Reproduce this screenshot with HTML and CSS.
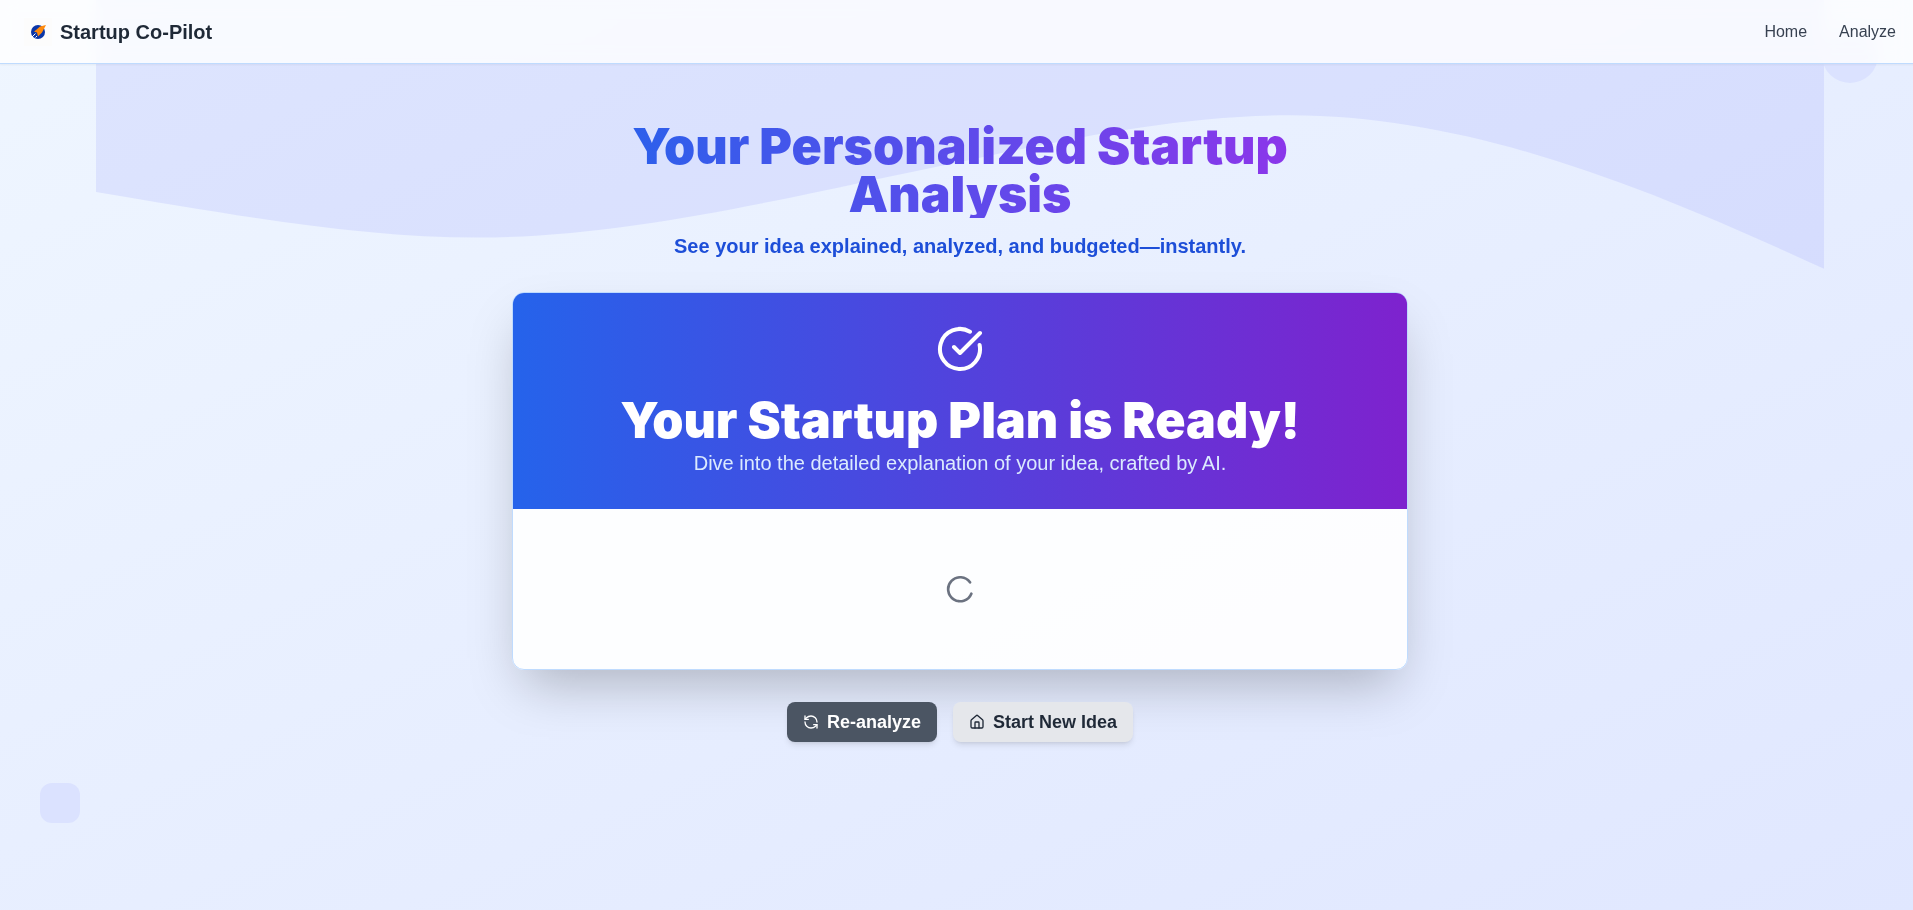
FILE: index.html
```html
<!DOCTYPE html>
<html lang="en">
<head>
    <meta charset="UTF-8">
    <meta name="viewport" content="width=device-width, initial-scale=1.0">
    <title>Startup Co-Pilot</title>
    <link rel="stylesheet" href="styles.css">
</head>
<body>
    <div class="page">
        <!-- Background shapes -->
        <div class="backdrop" aria-hidden="true">
            <svg class="wave" viewBox="0 0 1440 320">
                <path d="M0,160C120,180,220,198,318,198C450,198,600,159,720,135C800,118,900,96,995,96C1150,96,1300,160,1440,224L1440,0L0,0Z"/>
            </svg>
            <div class="shape circle"></div>
            <div class="shape square"></div>
        </div>

        <header class="navbar">
            <a class="brand" href="#">
                <svg class="logo" viewBox="0 0 28 28" aria-hidden="true">
                    <rect width="28" height="28" fill="#fcfcfc"/>
                    <circle cx="14" cy="14" r="7" fill="#0b36a8"/>
                    <path d="M22 7 16 8.500 12 12 10 13.500 13 14.500 14 18.500 18 14.500Z" fill="#ff8a0c"/>
                    <path d="m8 19 3.500-3.500M11.500 19.500l1.500-1.500" stroke="#fff" stroke-width="1"/>
                </svg>
                <span>Startup Co-Pilot</span>
            </a>
            <nav class="nav-links">
                <a href="#">Home</a>
                <a href="#">Analyze</a>
            </nav>
        </header>

        <main class="content">
            <h1>Your Personalized Startup Analysis</h1>
            <p class="tagline">See your idea explained, analyzed, and budgeted—instantly.</p>

            <section class="card">
                <div class="card-header">
                    <svg class="icon check" viewBox="0 0 24 24" aria-hidden="true">
                        <path d="M21.801 10A10 10 0 1 1 17 3.335"/>
                        <path d="m9 11 3 3L22 4"/>
                    </svg>
                    <h2>Your Startup Plan is Ready!</h2>
                    <p>Dive into the detailed explanation of your idea, crafted by AI.</p>
                </div>
                <div class="card-body">
                    <svg class="icon spinner" viewBox="0 0 24 24" role="img" aria-label="Loading">
                        <path d="M19.500 7A9 9 0 1 0 20.500 15.500"/>
                    </svg>
                </div>
            </section>

            <div class="actions">
                <button class="btn btn-dark" type="button">
                    <svg class="icon" viewBox="0 0 24 24" aria-hidden="true">
                        <path d="M21 12a9 9 0 0 0-9-9 9.750 9.750 0 0 0-6.740 2.740L3 8"/>
                        <path d="M3 3v5h5"/>
                        <path d="M3 12a9 9 0 0 0 9 9 9.750 9.750 0 0 0 6.740-2.740L21 16"/>
                        <path d="M16 16h5v5"/>
                    </svg>
                    Re-analyze
                </button>
                <button class="btn btn-light" type="button">
                    <svg class="icon" viewBox="0 0 24 24" aria-hidden="true">
                        <path d="M15 21v-8a1 1 0 0 0-1-1h-4a1 1 0 0 0-1 1v8"/>
                        <path d="M3 10a2 2 0 0 1 .709-1.528l7-5.999a2 2 0 0 1 2.582 0l7 5.999A2 2 0 0 1 21 10v9a2 2 0 0 1-2 2H5a2 2 0 0 1-2-2z"/>
                    </svg>
                    Start New Idea
                </button>
            </div>
        </main>
    </div>
</body>
</html>
```
FILE: styles.css
```css
* {
    box-sizing: border-box;
}

html {
    overflow-x: hidden;
}

body {
    font-family: "Liberation Sans", Arial, sans-serif;
    line-height: 24px;
    color: #1f2937;
    margin: 0;
}

h1, h2, p {
    margin: 0;
}

a {
    color: inherit;
    text-decoration: none;
}

.page {
    position: relative;
    min-height: 100vh;
    margin-right: -7px;
    overflow: hidden;
    background: linear-gradient(to bottom right, #eff6ff, #e0e7ff);
}

/* Background */
.backdrop {
    position: absolute;
    inset: 0;
}

.wave {
    position: absolute;
    top: 0;
    left: 0;
    width: 100%;
    height: 384px;
    fill: #9399fb;
    opacity: 0.18;
}

.shape {
    position: absolute;
    background: #dbe2ff;
}

.circle {
    top: 27px;
    right: 42px;
    width: 56px;
    height: 56px;
    border-radius: 50%;
}

.square {
    bottom: 87px;
    left: 40px;
    width: 40px;
    height: 40px;
    border-radius: 12px;
}

/* Navbar */
.navbar {
    position: relative;
    display: flex;
    justify-content: space-between;
    align-items: center;
    height: 64px;
    padding: 0 24px;
    background: rgba(255, 255, 255, 0.8);
    border-bottom: 1px solid #bfdbfe;
    box-shadow: 0 1px 2px rgba(0, 0, 0, 0.05);
    backdrop-filter: blur(8px);
}

.brand {
    display: flex;
    align-items: center;
    gap: 8px;
    font-size: 20px;
    font-weight: bold;
}

.logo {
    width: 28px;
    height: 28px;
}

.nav-links {
    display: flex;
    gap: 32px;
    color: #374151;
}

/* Content */
.content {
    position: relative;
    max-width: 928px;
    margin: 0 auto;
    padding: 58px 16px;
    text-align: center;
}

h1, h2 {
    font-family: "Arial Black", Inter, Arial, sans-serif;
    font-size: 50px;
    font-weight: 900;
}

h1 {
    max-width: 768px;
    margin: 0 auto 14px;
    line-height: 48px;
    background: linear-gradient(to right, #2563eb, #9333ea);
    background-clip: text;
    color: transparent;
}

.tagline {
    font-size: 20px;
    font-weight: bold;
    line-height: 28px;
    color: #1d4ed8;
}

.card {
    margin: 32px 0;
    overflow: hidden;
    background: rgba(255, 255, 255, 0.9);
    border: 1px solid #bfdbfe;
    border-radius: 12px;
    box-shadow: 0 25px 50px -12px rgba(0, 0, 0, 0.25);
}

.card-header {
    padding: 32px;
    background: linear-gradient(to right, #2563eb, #7e22ce);
    color: #fff;
}

.card-header h2 {
    line-height: 58px;
}

.card-header p {
    font-size: 20px;
    line-height: 28px;
    color: #dbeafe;
}

.card-body {
    display: flex;
    justify-content: center;
    padding: 64px;
}

.icon {
    width: 16px;
    height: 16px;
    fill: none;
    stroke: currentColor;
    stroke-width: 2;
    stroke-linecap: round;
    stroke-linejoin: round;
}

.check {
    display: block;
    width: 48px;
    height: 48px;
    margin: 0 auto 18px;
}

.spinner {
    width: 32px;
    height: 32px;
    color: #6b7280;
}

.actions {
    display: flex;
    flex-wrap: wrap;
    justify-content: center;
    gap: 16px;
}

.btn {
    display: flex;
    align-items: center;
    gap: 8px;
    height: 40px;
    padding: 0 16px;
    border: 0;
    border-radius: 8px;
    box-shadow: 0 4px 6px -1px rgba(0, 0, 0, 0.1), 0 2px 4px -2px rgba(0, 0, 0, 0.1);
    font-family: inherit;
    font-size: 18px;
    font-weight: bold;
    cursor: pointer;
}

.btn-dark {
    background: #4b5563;
    color: #fff;
}

.btn-light {
    background: #e5e7eb;
    color: #1f2937;
}
```
